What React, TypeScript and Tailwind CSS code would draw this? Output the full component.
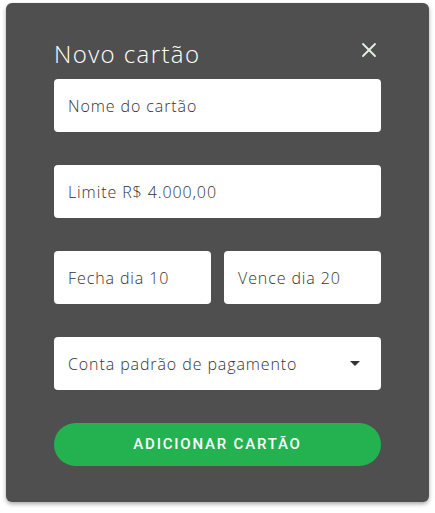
import { X } from "lucide-react";

const font = { fontFamily: "'Open Sans', Inter, sans-serif" };

function Field({ label, className = "" }: { label: string; className?: string }) {
  return (
    <div className={"h-[53px] bg-white rounded-[4px] flex items-center px-[14px] text-[16px] text-[#333] " + className}>
      <span className="font-light tracking-[0.9px]">{label}</span>
    </div>
  );
}

export default function App() {
  return (
    <div className="w-[435px] h-[513px] bg-white pt-[3px] pl-[6px]" style={font}>
      <div className="w-[423px] h-[499px] bg-[#4f4f4f] rounded-[6px] shadow-[0_2px_4px_rgba(0,0,0,0.35)] px-[48px] pt-[34px] flex flex-col">
        {/* Header */}
        <div className="flex items-center justify-between h-[36px] mb-[6px]">
          <h2 className="text-[24px] font-light text-white leading-none tracking-[1.4px] -mt-[2px]">Novo cartão</h2>
          <button className="text-[#e3f1e4] mr-[0px] -mt-[10px]">
            <X size={24} strokeWidth={1.8} />
          </button>
        </div>

        <div className="flex flex-col gap-[33px]">
          <Field label="Nome do cartão" />
          <Field label="Limite R$ 4.000,00" />
          <div className="flex gap-[13px]">
            <Field label="Fecha dia 10" className="flex-1" />
            <Field label="Vence dia 20" className="flex-1" />
          </div>
          <div className="h-[53px] bg-white rounded-[4px] flex items-center justify-between pl-[14px] pr-[21px] text-[16px] text-[#333]">
            <span className="font-light tracking-[0.9px]">Conta padrão de pagamento</span>
            <svg width="10" height="5" viewBox="0 0 10 5">
              <path d="M0 0 L10 0 L5 5 Z" fill="#333" />
            </svg>
          </div>
          <button
            className="h-[43px] rounded-full bg-[#24b251] text-white text-[15px] font-medium uppercase tracking-[1.8px]"
            style={{ fontFamily: "Roboto, sans-serif" }}
          >
            Adicionar cartão
          </button>
        </div>
      </div>
    </div>
  );
}
